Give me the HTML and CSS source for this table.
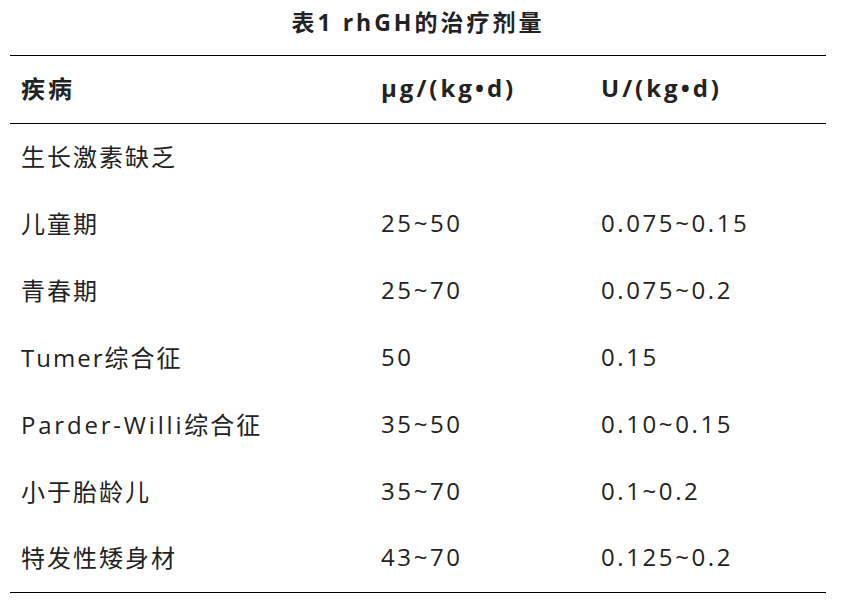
FILE: index.html
```html
<!DOCTYPE html>
<html lang="zh">
<head>
<meta charset="utf-8">
<link rel="stylesheet" href="styles.css">
</head>
<body>
<div class="wrap">
  <div class="title">表1 rhGH的治疗剂量</div>
  <table class="dose">
    <colgroup><col class="c1"><col class="c2"><col class="c3"></colgroup>
    <thead>
      <tr><th>疾病</th><th>μg/(kg•d)</th><th>U/(kg•d)</th></tr>
    </thead>
    <tbody>
      <tr><td>生长激素缺乏</td><td class="num"></td><td class="num"></td></tr>
      <tr><td>儿童期</td><td class="num">25~50</td><td class="num">0.075~0.15</td></tr>
      <tr><td>青春期</td><td class="num">25~70</td><td class="num">0.075~0.2</td></tr>
      <tr><td>Tumer综合征</td><td class="num">50</td><td class="num">0.15</td></tr>
      <tr><td><span class="lat">Parder-Willi</span>综合征</td><td class="num">35~50</td><td class="num">0.10~0.15</td></tr>
      <tr><td>小于胎龄儿</td><td class="num">35~70</td><td class="num">0.1~0.2</td></tr>
      <tr><td>特发性矮身材</td><td class="num">43~70</td><td class="num">0.125~0.2</td></tr>
    </tbody>
  </table>
</div>
</body>
</html>
```
FILE: styles.css
```css
html, body {
  margin: 0;
  padding: 0;
  background: #fff;
}
body {
  font-family: "Open Sans", "Noto Sans CJK SC", sans-serif;
  color: #222;
}
.wrap {
  width: 816px;
  margin-left: 10px;
}
.title {
  height: 55px;
  line-height: 44px;
  text-align: center;
  font-size: 23px;
  font-weight: bold;
  letter-spacing: 3px;
}
.dose {
  width: 816px;
  table-layout: fixed;
  border-collapse: collapse;
  font-size: 24px;
  letter-spacing: 2px;
}
.c1 { width: 360px; }
.c2 { width: 220px; }
.dose thead tr {
  border-top: 1.3px solid #000;
  border-bottom: 1.3px solid #000;
}
.dose tbody tr:last-child {
  border-bottom: 1.3px solid #000;
}
.dose th,
.dose td {
  text-align: left;
  padding: 0 0 4px 11px;
  box-sizing: border-box;
  white-space: nowrap;
}
.dose th {
  height: 68px;
  font-weight: bold;
  letter-spacing: 3px;
}
.dose td {
  height: 67px;
  font-weight: normal;
}
.dose td.num {
  letter-spacing: 2.6px;
}
.lat {
  letter-spacing: 2.8px;
}
```
